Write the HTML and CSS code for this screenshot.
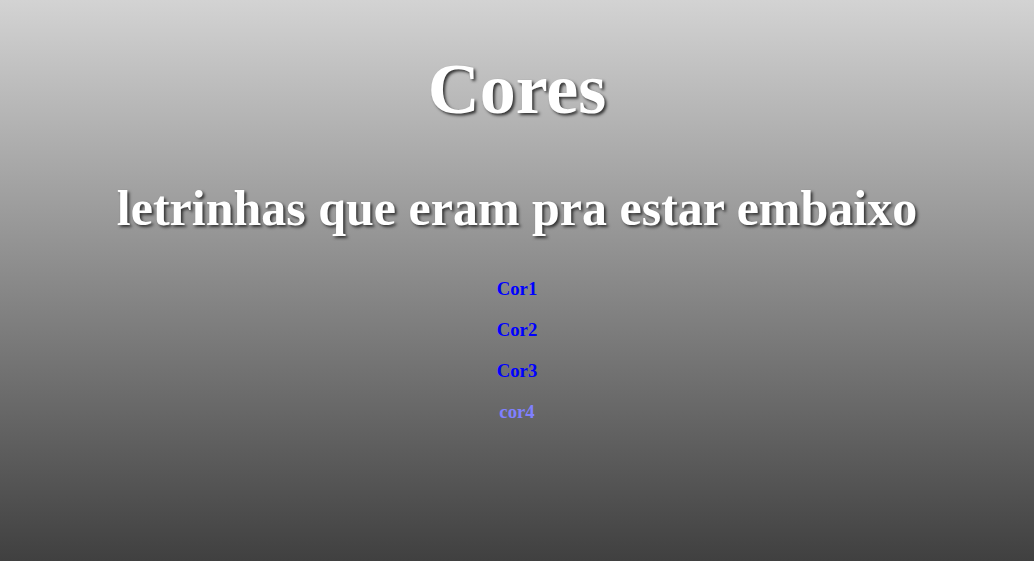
FILE: index.html
```html
<!DOCTYPE html>
<html lang="pt">
<head>
<meta charset="utf-8">
<title>Cores</title>
<link rel="stylesheet" href="styles.css">
</head>
<body>
<h1 class="title">Cores</h1>
<h2 class="subtitle">letrinhas que eram pra estar embaixo</h2>
<h3 class="item"><a class="link" href="#cor1">Cor1</a></h3>
<h3 class="item"><a class="link" href="#cor2">Cor2</a></h3>
<h3 class="item"><a class="link" href="#cor3">Cor3</a></h3>
<h3 class="item"><a class="link visited" href="#cor4">cor4</a></h3>
</body>
</html>
```
FILE: styles.css
```css
html {
  min-height: 100%;
  background: linear-gradient(to bottom, #d3d3d3, #404040);
}
body {
  margin: 0;
  text-align: center;
  font-family: "Liberation Serif", "Times New Roman", serif;
}
.title {
  font-size: 72px;
  margin: 0.67em 0;
  color: #ffffff;
  text-shadow: 2px 2px 3px #333333;
}
.subtitle {
  font-size: 50px;
  margin: 0.83em 0;
  color: #ffffff;
  text-shadow: 2px 2px 3px #333333;
}
.item {
  font-size: 18.72px;
  margin: 22px 0 0;
  line-height: 19px;
}
.link {
  color: #0000ff;
  text-decoration: none;
}
.link.visited {
  color: #8080ff;
}
```
